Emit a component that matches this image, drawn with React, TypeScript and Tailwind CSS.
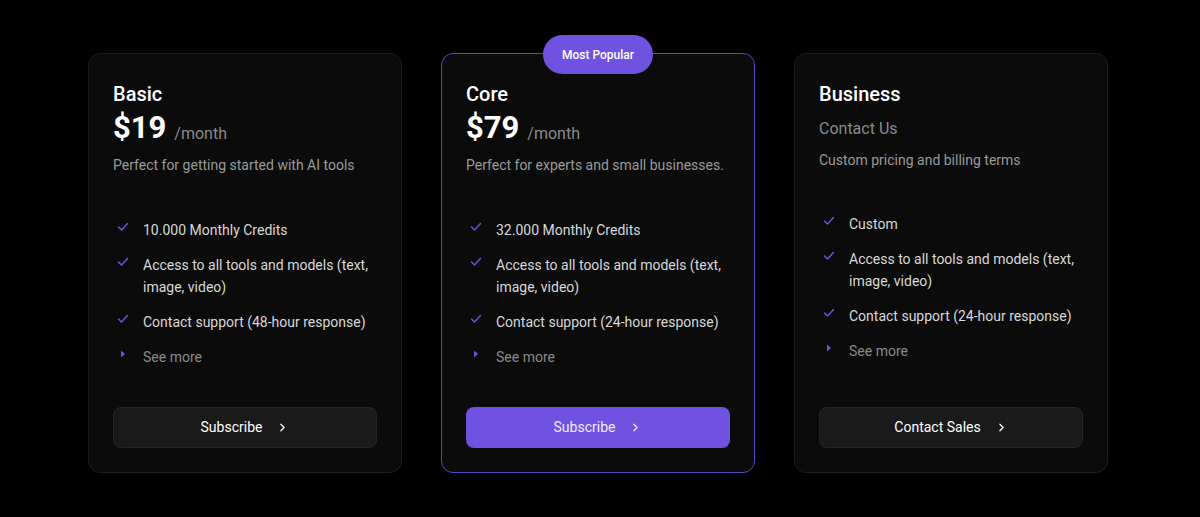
import { ChevronRight } from 'lucide-react';

type Plan = {
  name: string;
  price?: string;
  contact?: string;
  description: string;
  features: string[];
  cta: string;
  popular?: boolean;
};

const plans: Plan[] = [
  {
    name: 'Basic',
    price: '$19',
    description: 'Perfect for getting started with AI tools',
    features: [
      '10.000 Monthly Credits',
      'Access to all tools and models (text, image, video)',
      'Contact support (48-hour response)',
    ],
    cta: 'Subscribe',
  },
  {
    name: 'Core',
    price: '$79',
    description: 'Perfect for experts and small businesses.',
    features: [
      '32.000 Monthly Credits',
      'Access to all tools and models (text, image, video)',
      'Contact support (24-hour response)',
    ],
    cta: 'Subscribe',
    popular: true,
  },
  {
    name: 'Business',
    contact: 'Contact Us',
    description: 'Custom pricing and billing terms',
    features: [
      'Custom',
      'Access to all tools and models (text, image, video)',
      'Contact support (24-hour response)',
    ],
    cta: 'Contact Sales',
  },
];

const Check = () => (
  <svg width="12" height="10" viewBox="0 0 12 10" fill="none" className="mt-[3px] shrink-0">
    <path d="M1.5 5 L4.5 8 L10.5 1.5" stroke="#6b52d9" strokeWidth="1.5" strokeLinecap="round" strokeLinejoin="round" />
  </svg>
);

const Caret = () => (
  <svg width="12" height="10" viewBox="0 0 12 10" className="mt-[3px] shrink-0">
    <path d="M4 1.5 L8 5 L4 8.5 Z" fill="#6b52d9" />
  </svg>
);

const PlanCard = ({ plan }: { plan: Plan }) => (
  <div
    className={`relative flex w-[314px] flex-col rounded-xl border bg-[#0b0b0b] px-[24px] pt-[26px] pb-[24px] ${
      plan.popular ? 'border-[#5a47c2]' : 'border-[#1c1c1c]'
    }`}
  >
    {plan.popular && (
      <div className="absolute left-1/2 top-[-19px] flex h-[39px] -translate-x-1/2 items-center rounded-full bg-[#6f52e0] px-[19px] text-[12px] font-medium text-white">
        Most Popular
      </div>
    )}
    <div className="text-[20px] font-medium leading-7 text-white">{plan.name}</div>
    {plan.price ? (
      <>
        <div className="flex h-[42px] items-end pb-[3px]">
          <span className="text-[31px] font-bold leading-[38px] text-white">{plan.price}</span>
          <span className="ml-2 pb-[1px] text-[16px] leading-6 text-[#8a8a8a]">/month</span>
        </div>
        <div className="mt-[5px] text-[14px] leading-5 text-[#9a9a9a]">{plan.description}</div>
      </>
    ) : (
      <>
        <div className="pt-[9px] text-[16px] leading-6 text-[#8a8a8a]">{plan.contact}</div>
        <div className="mt-[9px] text-[14px] leading-5 text-[#9a9a9a]">{plan.description}</div>
      </>
    )}
    <ul className={`flex flex-col gap-[13px] ${plan.price ? 'mt-[44px]' : 'mt-[43px]'}`}>
      {plan.features.map((f) => (
        <li key={f} className="flex gap-[14px] pl-[4px] text-[14px] leading-[22px] text-[#d8d8d8]">
          <Check />
          <span>{f}</span>
        </li>
      ))}
      <li className="flex gap-[14px] pl-[4px] text-[14px] leading-[22px] text-[#8a8a8a]">
        <Caret />
        <span>See more</span>
      </li>
    </ul>
    <button
      className={`mt-auto flex h-[41px] w-full items-center justify-center gap-[14px] rounded-lg text-[14px] ${
        plan.popular
          ? 'bg-[#6f52e0] text-[#f0ecff]'
          : 'border border-[#262626] bg-[#1a1a1a] text-white'
      }`}
    >
      {plan.cta}
      <ChevronRight size={13} strokeWidth={2.25} />
    </button>
  </div>
);

export default function App() {
  return (
    <div
      className="flex h-[517px] w-full justify-center bg-black pt-[53px] pr-[4px]"
      style={{ fontFamily: 'Roboto, "Liberation Sans", sans-serif' }}
    >
      <div className="flex h-[420px] gap-[39px]">
        {plans.map((p) => (
          <PlanCard key={p.name} plan={p} />
        ))}
      </div>
    </div>
  );
}
